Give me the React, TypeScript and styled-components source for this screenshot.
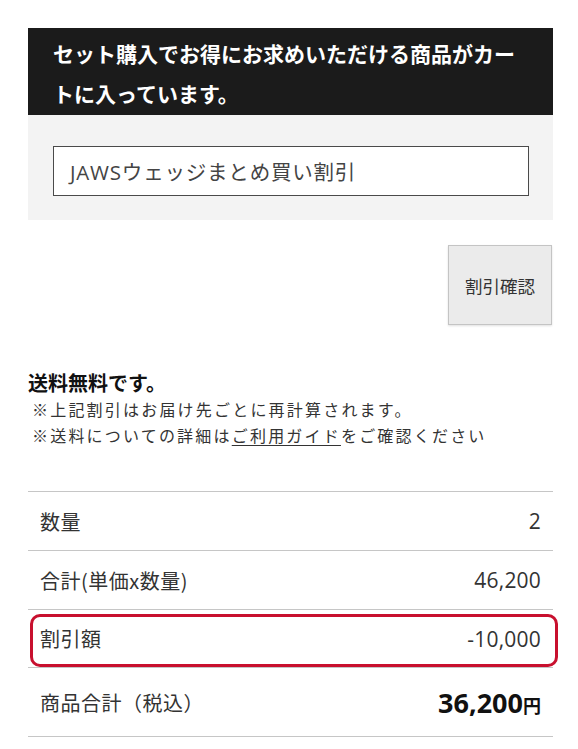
import { createGlobalStyle } from 'styled-components';
import styled from 'styled-components';

const GlobalStyle = createGlobalStyle`
  body {
    margin: 0;
    background: #fff;
    color: #222;
    font-family: "Open Sans", "Noto Sans CJK JP", sans-serif;
  }
`;

const Page = styled.div`
  width: 525px;
  padding: 28px 0 0 28px;
`;

const Notice = styled.div`
  background: #1b1b1b;
  color: #fff;
  font-family: "Noto Sans CJK JP", sans-serif;
  font-weight: 700;
  font-size: 21px;
  line-height: 40px;
  padding: 5px 25px 2px;
`;

const CouponArea = styled.div`
  background: #f3f3f3;
  padding: 31px 24px 24px 25px;
`;

const CouponField = styled.div`
  height: 48px;
  border: 1.5px solid #4a4a4a;
  background: #fff;
  display: flex;
  align-items: center;
  padding: 0 16px;
  font-size: 20.5px;
  color: #444;
  letter-spacing: 0.8px;
`;

const ButtonRow = styled.div`
  display: flex;
  justify-content: flex-end;
  margin-top: 25px;
  padding-right: 1px;
`;

const CheckButton = styled.button`
  width: 104px;
  height: 80px;
  background: #ebebeb;
  border: 1px solid #c4c4c4;
  box-shadow: 0 1px 2px rgba(0, 0, 0, 0.12);
  font-family: "Noto Sans CJK JP", sans-serif;
  font-size: 17.5px;
  color: #333;
  padding: 0;
`;

const Shipping = styled.div`
  margin-top: 44px;
`;

const ShippingTitle = styled.div`
  font-family: "Noto Sans CJK JP", sans-serif;
  font-weight: 700;
  font-size: 20px;
  line-height: 27px;
  color: #111;
`;

const Note = styled.div`
  font-family: "Noto Sans CJK JP", sans-serif;
  font-size: 16px;
  line-height: 26px;
  letter-spacing: 2.2px;
  color: #333;
  padding-left: 4px;

  a {
    color: inherit;
    text-decoration: underline;
    text-underline-offset: 3px;
  }
`;

const Summary = styled.div`
  margin-top: 43px;
  border-top: 1.5px solid #c6c6c6;
`;

const Row = styled.div<{ $height: number }>`
  position: relative;
  box-sizing: border-box;
  height: ${(p) => p.$height}px;
  display: flex;
  align-items: center;
  justify-content: space-between;
  padding: 0 12px;
  border-bottom: 1.5px solid #c6c6c6;
  color: #333;
`;

const Label = styled.span`
  font-family: "Noto Sans CJK JP", sans-serif;
  font-size: 20px;
  letter-spacing: 0.5px;
`;

const Value = styled.span`
  font-size: 21px;
  letter-spacing: 0.2px;
`;

const Highlight = styled.div`
  position: absolute;
  top: 4px;
  bottom: 0;
  left: 2px;
  right: -5px;
  border: 3px solid #c8102e;
  border-radius: 10px;
  pointer-events: none;
`;

const Total = styled.span`
  font-weight: 700;
  font-size: 27px;
  color: #111;
`;

const Yen = styled.span`
  font-family: "Noto Sans CJK JP", sans-serif;
  font-size: 18px;
  font-weight: 700;
`;

export default function App() {
  return (
    <>
      <GlobalStyle />
      <Page>
        <Notice>セット購入でお得にお求めいただける商品がカートに入っています。</Notice>
        <CouponArea>
          <CouponField>JAWSウェッジまとめ買い割引</CouponField>
        </CouponArea>
        <ButtonRow>
          <CheckButton type="button">割引確認</CheckButton>
        </ButtonRow>
        <Shipping>
          <ShippingTitle>送料無料です。</ShippingTitle>
          <Note>※上記割引はお届け先ごとに再計算されます。</Note>
          <Note>
            ※送料についての詳細は<a href="#guide">ご利用ガイド</a>をご確認ください
          </Note>
        </Shipping>
        <Summary>
          <Row $height={59}>
            <Label>数量</Label>
            <Value>2</Value>
          </Row>
          <Row $height={59}>
            <Label>合計(単価x数量)</Label>
            <Value>46,200</Value>
          </Row>
          <Row $height={58}>
            <Label>割引額</Label>
            <Value>-10,000</Value>
            <Highlight />
          </Row>
          <Row $height={69}>
            <Label>商品合計（税込）</Label>
            <Total>
              36,200<Yen>円</Yen>
            </Total>
          </Row>
        </Summary>
      </Page>
    </>
  );
}
